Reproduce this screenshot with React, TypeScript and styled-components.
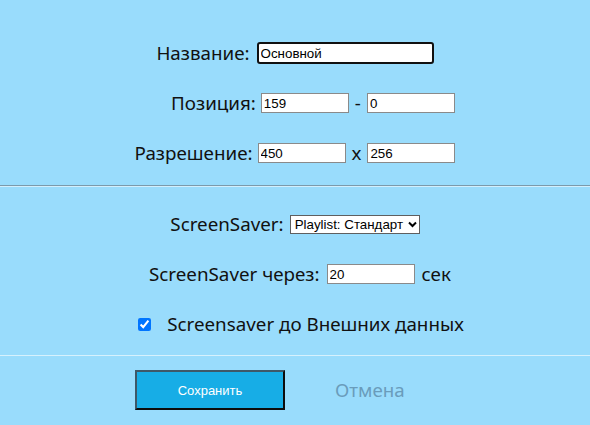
import React from "react";
import styled, { createGlobalStyle } from "styled-components";

const Global = createGlobalStyle`
  html, body { margin: 0; padding: 0; }
  body {
    background: #99dcfc;
    font-family: "Noto Sans", "Open Sans", sans-serif;
    color: #111;
    width: 590px;
    height: 425px;
    overflow: hidden;
  }
`;

const Page = styled.div`
  display: flex;
  flex-direction: column;
  padding-top: 28px;
`;

const Row = styled.div<{ $shift?: number; $gap?: number }>`
  height: 50px;
  display: flex;
  align-items: center;
  justify-content: center;
  gap: ${(p) => p.$gap ?? 7}px;
  padding-left: ${(p) => Math.max(0, (p.$shift ?? 0) * 2)}px;
  padding-right: ${(p) => Math.max(0, -(p.$shift ?? 0) * 2)}px;
`;

const Label = styled.span`
  font-size: 18.8px;
  line-height: 1;
  white-space: nowrap;
`;

const Sep = styled.span`
  font-size: 18.8px;
  line-height: 1;
  margin: 0 1px;
`;

const TextInput = styled.input<{ $w?: number; $focus?: boolean }>`
  box-sizing: border-box;
  width: ${(p) => p.$w ?? 88}px;
  height: ${(p) => (p.$focus ? 22 : 20)}px;
  font-family: "Liberation Sans", Arial, sans-serif;
  font-size: 13.33px;
  color: #000;
  background: #fff;
  padding: 1px 2px;
  margin: 0;
  outline: none;
  border: ${(p) => (p.$focus ? "2px solid #111" : "1px solid #8a8a8a")};
  border-radius: ${(p) => (p.$focus ? 3 : 0)}px;
`;

const SelectWrap = styled.span`
  position: relative;
  display: inline-flex;
`;

const Select = styled.select`
  box-sizing: border-box;
  appearance: none;
  width: 130px;
  height: 19px;
  font-family: "Liberation Sans", Arial, sans-serif;
  font-size: 13.33px;
  color: #000;
  background: #fff;
  border: 1px solid #5f5f5f;
  border-radius: 0;
  padding: 0 14px 0 4px;
  margin: 0;
`;

const Chevron = styled.svg`
  position: absolute;
  right: 3px;
  top: 6px;
  width: 9px;
  height: 7px;
  pointer-events: none;
`;

const Check = styled.input`
  width: 13px;
  height: 13px;
  margin: 0 16px 0 0;
  accent-color: #0075ff;
`;

const Divider = styled.div<{ $dark?: boolean }>`
  height: 2px;
  margin-top: ${(p) => (p.$dark ? 7 : 6)}px;
  box-sizing: border-box;
  border-top: 1px solid ${(p) => (p.$dark ? "#7c9aab" : "#d6f1fd")};
  border-bottom: 1px solid ${(p) => (p.$dark ? "#d2effd" : "#99dcfc")};
`;

const Section = styled.div`
  display: flex;
  flex-direction: column;
  margin-top: 12px;
`;

const Buttons = styled.div`
  display: flex;
  align-items: center;
  margin-top: 13px;
  padding-left: 135px;
  gap: 50px;
`;

const SaveButton = styled.button`
  box-sizing: border-box;
  width: 150px;
  height: 40px;
  background: #17ade6;
  color: #fff;
  font-family: "Liberation Sans", Arial, sans-serif;
  font-size: 13px;
  border-style: solid;
  border-width: 2px;
  border-color: #3e5868 #0c0c0c #0c0c0c #3e5868;
  padding: 0;
  cursor: pointer;
`;

const CancelLink = styled.span`
  font-size: 18.8px;
  color: #6a9cbb;
`;

export default function App() {
  return (
    <>
      <Global />
      <Page>
        <Row>
          <Label>Название:</Label>
          <TextInput $w={177} $focus defaultValue="Основной" />
        </Row>
        <Row $shift={18} $gap={5}>
          <Label>Позиция:</Label>
          <TextInput defaultValue="159" />
          <Sep>-</Sep>
          <TextInput defaultValue="0" />
        </Row>
        <Row $gap={5}>
          <Label>Разрешение:</Label>
          <TextInput defaultValue="450" />
          <Sep>x</Sep>
          <TextInput defaultValue="256" />
        </Row>
        <Divider $dark />
        <Section>
          <Row $gap={6}>
            <Label>ScreenSaver:</Label>
            <SelectWrap>
              <Select defaultValue="std">
                <option value="std">Playlist: Стандарт</option>
              </Select>
              <Chevron viewBox="0 0 9 7">
                <path d="M1 1.5 L4.5 5 L8 1.5" fill="none" stroke="#000" strokeWidth="2" />
              </Chevron>
            </SelectWrap>
          </Row>
          <Row $shift={5}>
            <Label>ScreenSaver через:</Label>
            <TextInput defaultValue="20" />
            <Label>сек</Label>
          </Row>
          <Row $shift={6} $gap={0}>
            <Check type="checkbox" defaultChecked />
            <Label>Screensaver до Внешних данных</Label>
          </Row>
        </Section>
        <Divider />
        <Buttons>
          <SaveButton>Сохранить</SaveButton>
          <CancelLink>Отмена</CancelLink>
        </Buttons>
      </Page>
    </>
  );
}
